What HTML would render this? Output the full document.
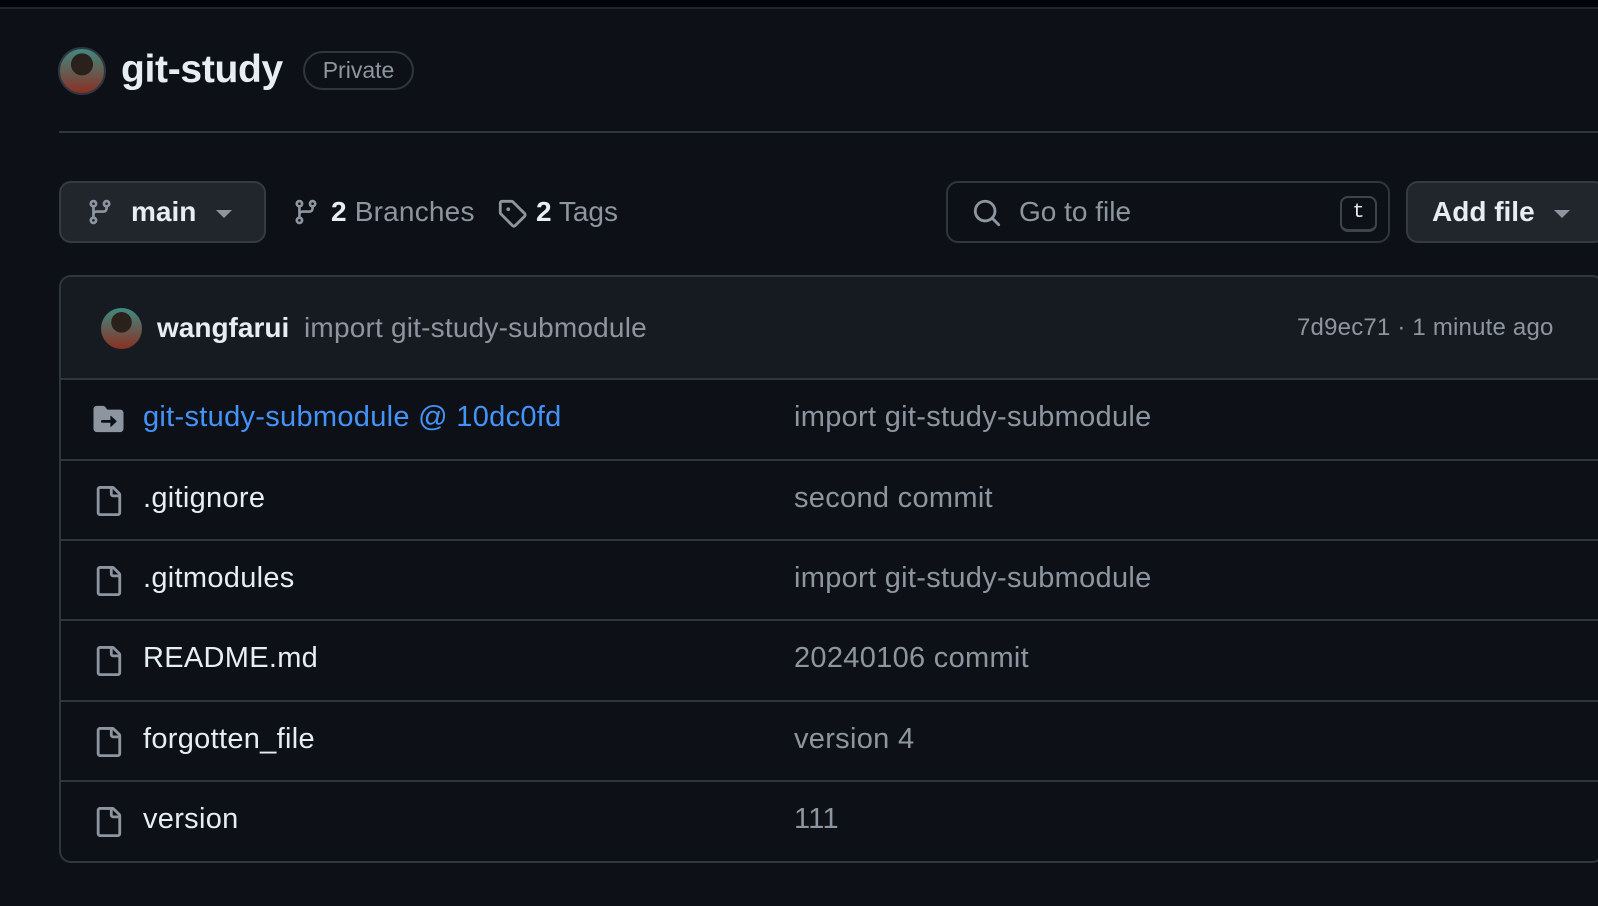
<!DOCTYPE html>
<html><head><meta charset="utf-8"><style>
*{box-sizing:border-box;margin:0;padding:0}
body{width:1598px;height:906px;background:#0d1117;font-family:"Liberation Sans",sans-serif;color:#e6edf3;position:relative;overflow:hidden}
.top{position:absolute;left:0;top:0;width:1598px;height:9px;background:#010409;border-bottom:2px solid #21262d}
.abs{position:absolute}
.btn{position:absolute;background:#21262d;border:2px solid #363b42;border-radius:12px}
.row{position:absolute;left:60px;width:1540px;height:80px;border-top:2px solid #30363d;font-size:29px;letter-spacing:0.3px}
.row .ic{position:absolute;left:33px;top:24px}
.row .nm{position:absolute;left:83px;top:21px}
.row .msg{position:absolute;left:734px;top:21px;color:#8d96a0}
</style></head><body>
<div class="top"></div>
<div class="abs" style="left:58px;top:47px;width:48px;height:48px;border-radius:50%;background:radial-gradient(circle at 50% 35%,#2a201c 0 30%,transparent 31%),linear-gradient(#3f8a80,#8a3024);border:2px solid #30363d"></div>
<div class="abs" style="left:121px;top:48px;font-size:39px;font-weight:bold;letter-spacing:-0.3px">git-study</div>
<div class="abs" style="left:303px;top:51px;width:111px;height:39px;border:2px solid #30363d;border-radius:20px;color:#8d96a0;font-size:23px;text-align:center;line-height:35px">Private</div>
<div class="abs" style="left:59px;top:131px;width:1540px;height:2px;background:#30363d"></div>

<div class="btn" style="left:59px;top:181px;width:207px;height:62px"></div>
<svg class="abs" style="left:86px;top:198px" width="28" height="28" viewBox="0 0 16 16" fill="#8d96a0"><path d="M9.5 3.25a2.25 2.25 0 1 1 3 2.122V6A2.5 2.5 0 0 1 10 8.5H6a1 1 0 0 0-1 1v1.128a2.251 2.251 0 1 1-1.5 0V5.372a2.25 2.25 0 1 1 1.5 0v1.836A2.493 2.493 0 0 1 6 7h4a1 1 0 0 0 1-1v-.628A2.25 2.25 0 0 1 9.5 3.25Zm-6 0a.75.75 0 1 0 1.5 0 .75.75 0 0 0-1.5 0Zm8.25-.75a.75.75 0 1 0 0 1.5.75.75 0 0 0 0-1.5ZM4.25 12a.75.75 0 1 0 0 1.5.75.75 0 0 0 0-1.5Z"/></svg>
<div class="abs" style="left:131px;top:196px;font-size:28px;font-weight:bold">main</div>
<div class="abs" style="left:216px;top:210px;border-left:8px solid transparent;border-right:8px solid transparent;border-top:8px solid #8d96a0"></div>

<svg class="abs" style="left:292px;top:198px" width="28" height="28" viewBox="0 0 16 16" fill="#8d96a0"><path d="M9.5 3.25a2.25 2.25 0 1 1 3 2.122V6A2.5 2.5 0 0 1 10 8.5H6a1 1 0 0 0-1 1v1.128a2.251 2.251 0 1 1-1.5 0V5.372a2.25 2.25 0 1 1 1.5 0v1.836A2.493 2.493 0 0 1 6 7h4a1 1 0 0 0 1-1v-.628A2.25 2.25 0 0 1 9.5 3.25Zm-6 0a.75.75 0 1 0 1.5 0 .75.75 0 0 0-1.5 0Zm8.25-.75a.75.75 0 1 0 0 1.5.75.75 0 0 0 0-1.5ZM4.25 12a.75.75 0 1 0 0 1.5.75.75 0 0 0 0-1.5Z"/></svg>
<div class="abs" style="left:331px;top:196px;font-size:28px;color:#8d96a0;letter-spacing:0.2px"><b style="color:#e6edf3">2</b> Branches</div>
<svg class="abs" style="left:497px;top:198px" width="30" height="30" viewBox="0 0 16 16" fill="#8d96a0"><path d="M1 7.775V2.75C1 1.784 1.784 1 2.75 1h5.025c.464 0 .91.184 1.238.513l6.25 6.25a1.75 1.75 0 0 1 0 2.474l-5.026 5.026a1.75 1.75 0 0 1-2.474 0l-6.25-6.25A1.752 1.752 0 0 1 1 7.775Zm1.5 0c0 .066.026.13.073.177l6.25 6.250a.25.25 0 0 0 .354 0l5.025-5.025a.25.25 0 0 0 0-.354l-6.25-6.25a.25.25 0 0 0-.177-.073H2.75a.25.25 0 0 0-.25.25ZM6 5a1 1 0 1 1 0 2 1 1 0 0 1 0-2Z"/></svg>
<div class="abs" style="left:536px;top:196px;font-size:28px;color:#8d96a0"><b style="color:#e6edf3">2</b> Tags</div>

<div class="abs" style="left:946px;top:181px;width:444px;height:62px;border:2px solid #30363d;border-radius:12px;background:#0d1117"></div>
<svg class="abs" style="left:972px;top:198px" width="30" height="30" viewBox="0 0 16 16" fill="#8d96a0"><path d="M10.68 11.74a6 6 0 0 1-7.922-8.982 6 6 0 0 1 8.982 7.922l3.04 3.04a.749.749 0 0 1-.326 1.275.749.749 0 0 1-.734-.215ZM11.5 7a4.499 4.499 0 1 0-8.997 0A4.499 4.499 0 0 0 11.5 7Z"/></svg>
<div class="abs" style="left:1019px;top:196px;font-size:28px;color:#8d96a0">Go to file</div>
<div class="abs" style="left:1340px;top:196px;width:37px;height:36px;border:2px solid #3d444d;border-bottom-width:3px;border-radius:8px;font-family:'Liberation Mono',monospace;font-size:20px;text-align:center;line-height:30px;color:#e6edf3">t</div>
<div class="btn" style="left:1406px;top:181px;width:200px;height:62px"></div>
<div class="abs" style="left:1432px;top:196px;font-size:28px;font-weight:bold">Add file</div>
<div class="abs" style="left:1554px;top:210px;border-left:8px solid transparent;border-right:8px solid transparent;border-top:8px solid #8d96a0"></div>

<div class="abs" style="left:59px;top:275px;width:1545px;height:588px;border:2px solid #30363d;border-radius:12px;overflow:hidden">
<div style="height:103px;background:#161b22"></div></div>
<div class="abs" style="left:101px;top:308px;width:41px;height:41px;border-radius:50%;background:radial-gradient(circle at 50% 35%,#2a201c 0 30%,transparent 31%),linear-gradient(#3f8a80,#8a3024)"></div>
<div class="abs" style="left:157px;top:312px;font-size:28px;font-weight:bold">wangfarui</div>
<div class="abs" style="left:304px;top:312px;font-size:28px;color:#8d96a0;letter-spacing:0.2px">import git-study-submodule</div>
<div class="abs" style="left:1297px;top:314px;font-size:24px;color:#8d96a0;letter-spacing:0.2px">7d9ec71 · 1 minute ago</div>

<div class="row" style="top:378px"><svg class="ic" style="left:32px" width="33" height="30" viewBox="0 0 16 16" fill="#8d96a0"><path d="M0 2.75C0 1.784.784 1 1.75 1H5c.55 0 1.07.26 1.4.7l.9 1.2a.25.25 0 0 0 .2.1h6.75c.966 0 1.75.784 1.75 1.75v8.5A1.75 1.75 0 0 1 14.25 15H1.75A1.75 1.75 0 0 1 0 13.25Zm9.42 9.36 2.883-2.677a.25.25 0 0 0 0-.366L9.42 6.39a.249.249 0 0 0-.42.183V8.5H4.75a.75.75 0 0 0 0 1.5H9v1.927c0 .218.26.331.42.183Z"/></svg><div class="nm" style="color:#4493f8">git-study-submodule @ 10dc0fd</div><div class="msg">import git-study-submodule</div></div>
<div class="row" style="top:459px"><svg class="ic" width="30" height="32" viewBox="0 0 16 16" fill="#8d96a0"><path d="M2 1.75C2 .784 2.784 0 3.75 0h6.586c.464 0 .909.184 1.237.513l2.914 2.914c.329.328.513.773.513 1.237v9.586A1.75 1.75 0 0 1 13.25 16h-9.5A1.75 1.75 0 0 1 2 14.25Zm1.75-.25a.25.25 0 0 0-.25.25v12.5c0 .138.112.25.25.25h9.5a.25.25 0 0 0 .25-.25V6h-2.75A1.75 1.75 0 0 1 9 4.25V1.5Zm6.75.062V4.25c0 .138.112.25.25.25h2.688l-.011-.013-2.914-2.914-.013-.011Z"/></svg><div class="nm">.gitignore</div><div class="msg">second commit</div></div>
<div class="row" style="top:539px"><svg class="ic" width="30" height="32" viewBox="0 0 16 16" fill="#8d96a0"><path d="M2 1.75C2 .784 2.784 0 3.75 0h6.586c.464 0 .909.184 1.237.513l2.914 2.914c.329.328.513.773.513 1.237v9.586A1.75 1.75 0 0 1 13.25 16h-9.5A1.75 1.75 0 0 1 2 14.25Zm1.75-.25a.25.25 0 0 0-.25.25v12.5c0 .138.112.25.25.25h9.5a.25.25 0 0 0 .25-.25V6h-2.75A1.75 1.75 0 0 1 9 4.25V1.5Zm6.75.062V4.25c0 .138.112.25.25.25h2.688l-.011-.013-2.914-2.914-.013-.011Z"/></svg><div class="nm">.gitmodules</div><div class="msg">import git-study-submodule</div></div>
<div class="row" style="top:619px"><svg class="ic" width="30" height="32" viewBox="0 0 16 16" fill="#8d96a0"><path d="M2 1.75C2 .784 2.784 0 3.75 0h6.586c.464 0 .909.184 1.237.513l2.914 2.914c.329.328.513.773.513 1.237v9.586A1.75 1.75 0 0 1 13.25 16h-9.5A1.75 1.75 0 0 1 2 14.25Zm1.75-.25a.25.25 0 0 0-.25.25v12.5c0 .138.112.25.25.25h9.5a.25.25 0 0 0 .25-.25V6h-2.75A1.75 1.75 0 0 1 9 4.25V1.5Zm6.75.062V4.25c0 .138.112.25.25.25h2.688l-.011-.013-2.914-2.914-.013-.011Z"/></svg><div class="nm">README.md</div><div class="msg">20240106 commit</div></div>
<div class="row" style="top:700px"><svg class="ic" width="30" height="32" viewBox="0 0 16 16" fill="#8d96a0"><path d="M2 1.75C2 .784 2.784 0 3.75 0h6.586c.464 0 .909.184 1.237.513l2.914 2.914c.329.328.513.773.513 1.237v9.586A1.75 1.75 0 0 1 13.25 16h-9.5A1.75 1.75 0 0 1 2 14.25Zm1.75-.25a.25.25 0 0 0-.25.25v12.5c0 .138.112.25.25.25h9.5a.25.25 0 0 0 .25-.25V6h-2.75A1.75 1.75 0 0 1 9 4.25V1.5Zm6.75.062V4.25c0 .138.112.25.25.25h2.688l-.011-.013-2.914-2.914-.013-.011Z"/></svg><div class="nm">forgotten_file</div><div class="msg">version 4</div></div>
<div class="row" style="top:780px"><svg class="ic" width="30" height="32" viewBox="0 0 16 16" fill="#8d96a0"><path d="M2 1.75C2 .784 2.784 0 3.75 0h6.586c.464 0 .909.184 1.237.513l2.914 2.914c.329.328.513.773.513 1.237v9.586A1.75 1.75 0 0 1 13.25 16h-9.5A1.75 1.75 0 0 1 2 14.25Zm1.75-.25a.25.25 0 0 0-.25.25v12.5c0 .138.112.25.25.25h9.5a.25.25 0 0 0 .25-.25V6h-2.75A1.75 1.75 0 0 1 9 4.25V1.5Zm6.75.062V4.25c0 .138.112.25.25.25h2.688l-.011-.013-2.914-2.914-.013-.011Z"/></svg><div class="nm">version</div><div class="msg">111</div></div>
</body></html>
